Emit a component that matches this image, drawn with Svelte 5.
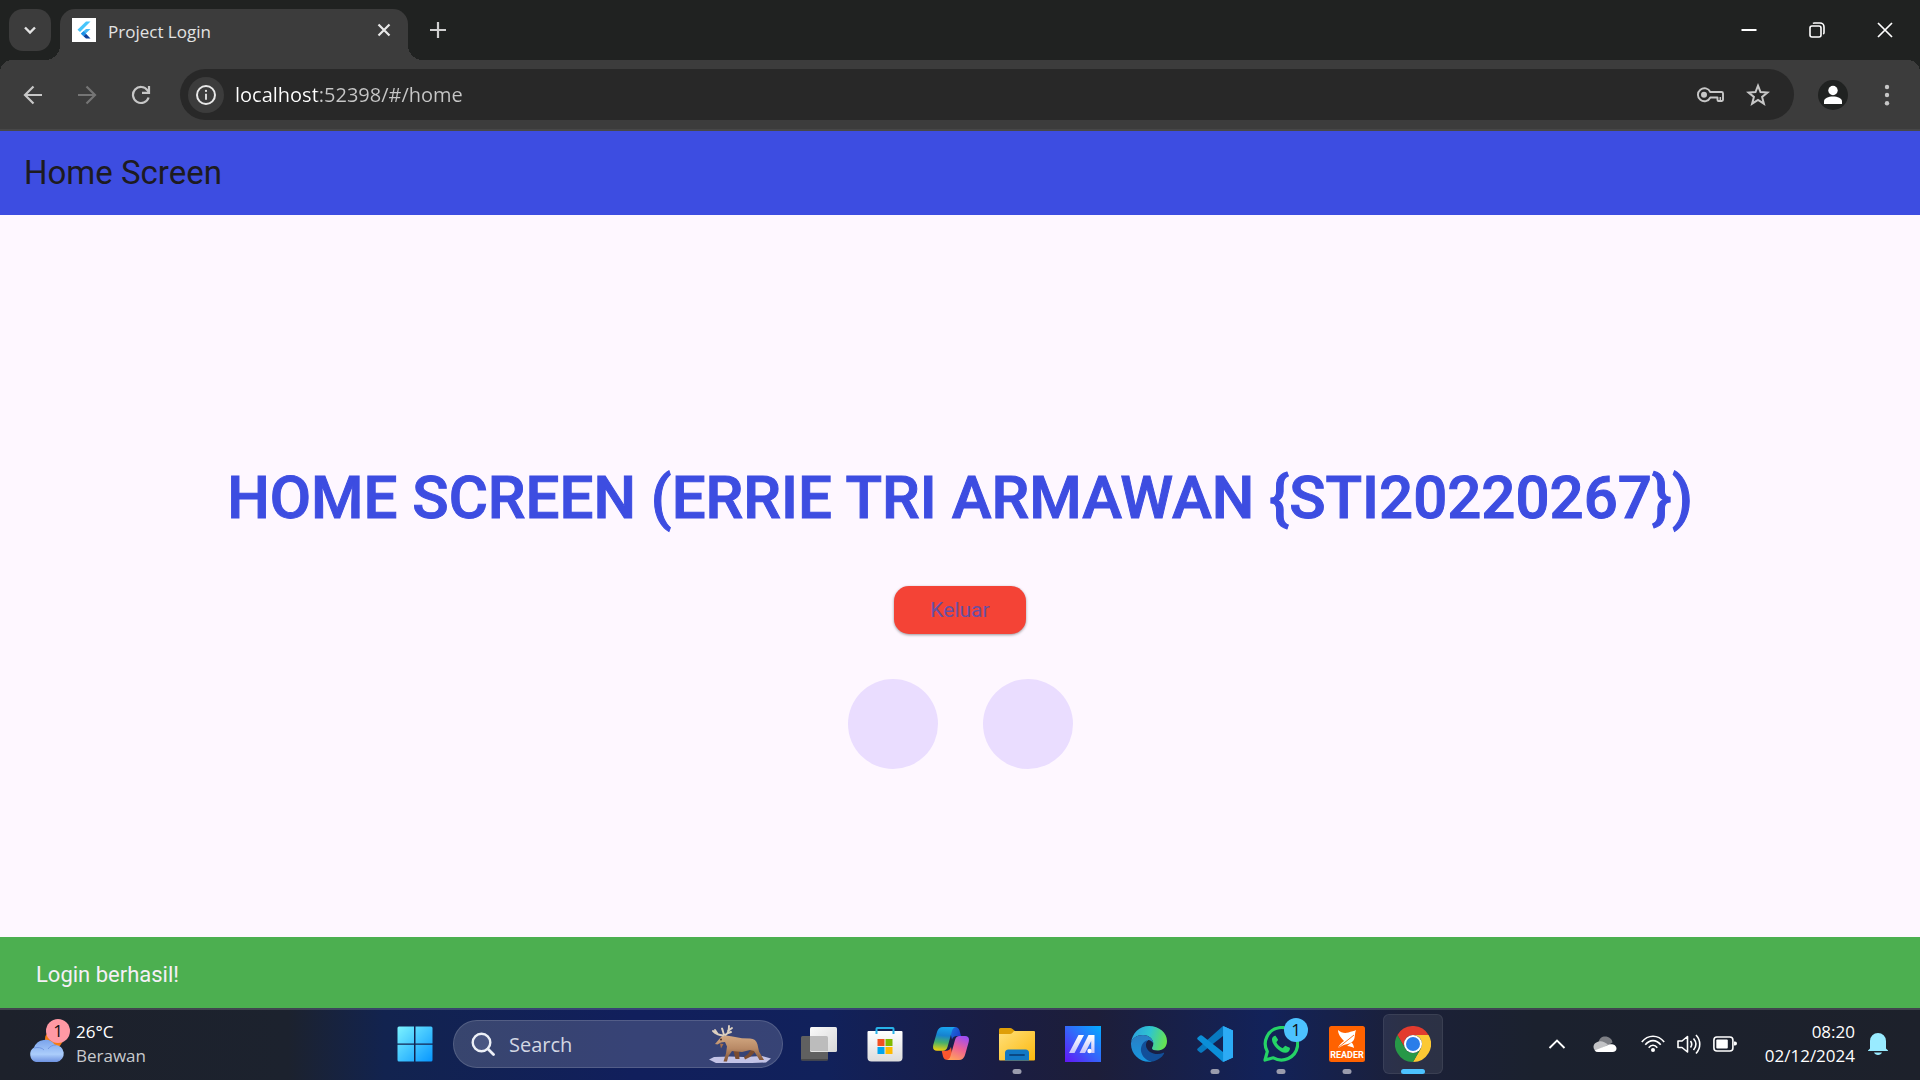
<script>
  let url = $state('localhost:52398/#/home');
  let query = $state('');
</script>

<div class="screen">
  <header class="tabstrip">
    <button class="tab-search" aria-label="Search tabs">
      <svg width="18" height="18" viewBox="0 0 18 18"><path d="M4 6.5l5 5 5-5" fill="none" stroke="#e3e3e3" stroke-width="2.4" /></svg>
    </button>
    <div class="tab">
      <svg class="favicon" width="24" height="24" viewBox="0 0 24 24">
        <rect width="24" height="24" fill="#fff" />
        <path d="M14 3.5h4.5L8 14l-2.5-2.3z" fill="#47c5fb" />
        <path d="M14 11h4.5l-4.7 4.5L11.500 18 8.800 15.500z" fill="#47b8f5" />
        <path d="M11.500 13.200l2.500 2.600-2.500 2.500-2.600-2.500z" fill="#1b8fe8" />
        <path d="M11.500 18.300l2.500-2.500 4.500 4.700H14z" fill="#0b3f9c" />
      </svg>
      <span class="tab-title">Project Login</span>
      <button class="plain tab-close" aria-label="Close tab">
        <svg width="14" height="14" viewBox="0 0 14 14"><path d="M1.500 1.500l11 11M12.500 1.500l-11 11" stroke="#e8e8e8" stroke-width="2.200" /></svg>
      </button>
    </div>
    <button class="plain new-tab" aria-label="New tab">
      <svg width="16" height="16" viewBox="0 0 16 16"><path d="M8 0v16M0 8h16" stroke="#d0d0d0" stroke-width="2.200" /></svg>
    </button>
    <div class="window-controls">
      <button class="plain" aria-label="Minimize">
        <svg width="16" height="16" viewBox="0 0 16 16"><path d="M.5 8h15" stroke="#fff" stroke-width="2" /></svg>
      </button>
      <button class="plain" aria-label="Restore">
        <svg width="16" height="16" viewBox="0 0 16 16" fill="none" stroke="#fff" stroke-width="1.600"><rect x="1" y="4" width="11" height="11" rx="2" /><path d="M4 1.500C4.500 1 5 1 5.500 1H11a4 4 0 0 1 4 4v5.500c0 .7-.3 1.200-.8 1.500" /></svg>
      </button>
      <button class="plain" aria-label="Close">
        <svg width="16" height="16" viewBox="0 0 16 16"><path d="M1 1l14 14M15 1L1 15" stroke="#fff" stroke-width="1.700" /></svg>
      </button>
    </div>
  </header>

  <nav class="toolbar" aria-label="Browser">
    <button class="plain nav" aria-label="Back">
      <svg width="20" height="20" viewBox="0 0 20 20" fill="none" stroke="#c7c7c7" stroke-width="2.200"><path d="M19 10H3M10.500 1.500L2 10l8.500 8.500" /></svg>
    </button>
    <button class="plain nav" aria-label="Forward">
      <svg width="20" height="20" viewBox="0 0 20 20" fill="none" stroke="#757575" stroke-width="2.200"><path d="M1 10h16M9.500 1.500L18 10l-8.500 8.500" /></svg>
    </button>
    <button class="plain nav" aria-label="Reload">
      <svg width="20" height="20" viewBox="0 0 20 20" fill="none" stroke="#c7c7c7" stroke-width="2.200"><path d="M17.600 12.500A8 8 0 1 1 16.500 5.300L18 7.300" /><path d="M18 1v6.900h-7" /></svg>
    </button>
    <div class="address">
      <button class="site-info" aria-label="Site information">
        <svg width="22" height="22" viewBox="0 0 22 22"><circle cx="11" cy="11" r="9" fill="none" stroke="#e8e8e8" stroke-width="2" /><path d="M11 9.800v6" stroke="#e8e8e8" stroke-width="1.800" /><circle cx="11" cy="6.900" r="1.100" fill="#e8e8e8" /></svg>
      </button>
      <input class="url" type="text" aria-label="Address" spellcheck="false" bind:value={url} />
      <button class="plain small" aria-label="Passwords">
        <svg width="28" height="16" viewBox="0 0 28 16" fill="none" stroke="#c7c7c7" stroke-width="1.900"><path d="M14.300 5H25.500q1.500 0 1.500 1.500v6.300q0 1.200-1.200 1.200h-3.300q-1 0-1-1v-2.500h-7.200a6.500 6.500 0 1 1 0-5.500z" stroke-linejoin="round" /><circle cx="8" cy="7.800" r="3" fill="#c7c7c7" stroke="none" /><path d="M24.300 10v4" stroke-width="1.500" /></svg>
      </button>
      <button class="plain small" aria-label="Bookmark this tab">
        <svg width="24" height="24" viewBox="0 0 24 24"><path d="M12 2.700l2.500 6.300 7 .5-5.400 4.400 1.800 6.800-5.900-3.800-5.900 3.800 1.800-6.800-5.400-4.400 7-.5z" fill="none" stroke="#c7c7c7" stroke-width="2" /></svg>
      </button>
    </div>
    <button class="profile" aria-label="Profile">
      <svg width="30" height="30" viewBox="0 0 30 30" fill="#fff"><circle cx="15" cy="10.500" r="4.700" /><path d="M6 24v-2.500c0-3.500 4.500-5 9-5s9 1.500 9 5V24z" /></svg>
    </button>
    <button class="plain more" aria-label="More">
      <svg width="6" height="22" viewBox="0 0 6 22" fill="#c7c7c7"><circle cx="3" cy="3" r="2.200" /><circle cx="3" cy="11" r="2.200" /><circle cx="3" cy="19.300" r="2.200" /></svg>
    </button>
  </nav>

  <div class="page">
    <header class="appbar"><span>Home Screen</span></header>
    <main>
      <h1>HOME SCREEN (ERRIE TRI ARMAWAN &#123;STI20220267&#125;)</h1>
      <button class="logout">Keluar</button>
      <div class="avatars">
        <div class="avatar"></div>
        <div class="avatar"></div>
      </div>
    </main>
    <div class="snackbar" role="status">Login berhasil!</div>
  </div>

  <footer class="taskbar">
    <button class="plain weather">
      <span class="weather-icon">
        <svg width="42" height="44" viewBox="0 0 42 44">
          <defs><linearGradient id="cloud" x2="0" y2="1"><stop stop-color="#7ba4ec" /><stop offset=".65" stop-color="#abcdfb" /><stop offset="1" stop-color="#6e92e0" /></linearGradient></defs>
          <circle cx="26" cy="20" r="9" fill="#f57c12" />
          <path d="M8 43a8 8 0 0 1-2-14.500A12 12 0 0 1 27 26a8.600 8.600 0 0 1 2 17z" fill="url(#cloud)" />
          <path d="M6 29c4-1 8-.5 10 2M20 30c2-3 5-4 8-4" fill="none" stroke="#7298e3" stroke-width="1" />
        </svg>
        <span class="badge pink">1</span>
      </span>
      <span class="weather-text"><span>26°C</span><span class="dim">Berawan</span></span>
    </button>

    <div class="apps">
      <button class="app" aria-label="Start">
        <svg width="36" height="36" viewBox="0 0 36 36">
          <defs><linearGradient id="win" x1="0" y1="0" x2="1" y2="1" gradientUnits="objectBoundingBox"><stop stop-color="#7cf3ff" /><stop offset="1" stop-color="#0796ff" /></linearGradient></defs>
          <path d="M2 0.500h15v17H.5V2Q.5.500 2 .5zM18.500.5h15.500q1.500 0 1.500 1.500v15.500h-17zM.5 18.800h16.500v16.700H2Q.5 35.500.5 34zM18.500 18.800h17V34q0 1.500-1.500 1.500H18.500z" fill="url(#win)" />
        </svg>
      </button>
      <label class="search">
        <svg width="24" height="24" viewBox="0 0 24 24" fill="none" stroke="#edf0f7"><circle cx="10.500" cy="10.500" r="8.800" stroke-width="2.400" fill="#6672a0" fill-opacity=".4" /><path d="M17 17l5.500 5.500" stroke-width="2.800" stroke-linecap="round" /></svg>
        <input type="search" placeholder="Search" aria-label="Search" bind:value={query} />
        <svg width="64" height="40" viewBox="0 0 64 40">
          <defs><linearGradient id="moose" x2="0" y2="1"><stop stop-color="#d3a983" /><stop offset=".5" stop-color="#b98a66" /><stop offset="1" stop-color="#7d5034" /></linearGradient></defs>
          <path d="M1 35.500l5-2.500 16-.5 14 .5 18-1 9 2.500-5 4-14 .5H8z" fill="#c3c3e6" />
          <path d="M25 25l2.500 10h4L31 25zM44 24l-4 6-4 3 1 2.500 5-2.500 6-6z" fill="#7a4c31" />
          <path d="M7 20l6-7q2-2 5-1.500l5 .8 11 2 8 .2c4 0 6.500 2 7.500 6l1.500 7 5 8.500h-4.500L46 27l-4-1-8 2-10-1-3.500 5-1.500 5.500h-3.500l2.500-8 1-7-2-4.500-4 .5-3.500 2z" fill="url(#moose)" />
          <path d="M12 19.500l1 5 2.500-4.500z" fill="#a8714c" />
          <path d="M15 11.500Q9 11 5 7M10 10.500L7 6M17 11c3-1 4-4 4-9M16 10.500c-1-2-1-4-2-6M20 7l4-3M20 9l3-1" fill="none" stroke="#ddd0c0" stroke-width="1.900" stroke-linecap="round" />
          <circle cx="13" cy="15.500" r=".9" fill="#3b241c" />
        </svg>
      </label>
      <button class="app" aria-label="Task view">
        <svg width="36" height="36" viewBox="0 0 36 36">
          <defs><linearGradient id="tv" x2="1" y2="1"><stop stop-color="#fafafa" /><stop offset="1" stop-color="#d8d8d8" /></linearGradient></defs>
          <rect y="10" width="27" height="24.500" rx="1.500" fill="#606060" /><path d="M0 33h27v.5q0 1-1 1H1q-1 0-1-1z" fill="#484848" />
          <rect x="9" y="1" width="27" height="25" rx="1.500" fill="url(#tv)" /><path d="M9 10h16.500q1.500 0 1.500 1.500V25H10.500Q9 25 9 23.500z" fill="#bcbcbc" />
        </svg>
      </button>
      <button class="app" aria-label="Store">
        <svg width="36" height="36" viewBox="0 0 36 36">
          <defs><linearGradient id="bag" x2="0" y2="1"><stop stop-color="#fff" /><stop offset="1" stop-color="#dcdcdc" /></linearGradient></defs>
          <path d="M1.500 5h33q1 0 1 1v25.500q0 4-4 4h-27q-4 0-4-4V6q0-1 1-1z" fill="url(#bag)" />
          <path d="M9.500 8V2.800q0-.8.8-.8h15.400q.8 0 .8.800V8" fill="none" stroke="#27b2e8" stroke-width="2" />
          <path d="M10.500 13h7v7h-7z" fill="#f25022" /><path d="M18.500 13h7v7h-7z" fill="#7fba00" /><path d="M10.500 21h7v7h-7z" fill="#00a4ef" /><path d="M18.500 21h7v7h-7z" fill="#ffb900" />
        </svg>
      </button>
      <button class="app" aria-label="Copilot">
        <svg width="36" height="36" viewBox="0 0 36 36">
          <defs>
            <linearGradient id="cpa" x1=".4" x2=".3" y2="1"><stop stop-color="#19a3ee" /><stop offset=".35" stop-color="#1682cf" /><stop offset=".65" stop-color="#46b06b" /><stop offset="1" stop-color="#f3d00b" /></linearGradient>
            <linearGradient id="cpb" x1=".7" x2=".3" y2="1"><stop stop-color="#a04ef2" /><stop offset=".5" stop-color="#ee6293" /><stop offset="1" stop-color="#ffa05c" /></linearGradient>
            <linearGradient id="cpc" x2="1" y2=".6"><stop stop-color="#1c79e0" /><stop offset="1" stop-color="#1b3fc8" /></linearGradient>
          </defs>
          <path d="M16 1h6q3.500 0 4.500 3.500l1.500 5.500h-4q-4 0-5 3.500z" fill="url(#cpc)" />
          <path d="M20 34h-5q-4 0-5-3.500l-1.300-5.800H13q4 0 5-4z" fill="#f9562f" />
          <path d="M10 1h13q-3 .3-4 4l-4.500 16q-1.200 3.800-4.500 3.800H4q-5 0-3.700-6L4 6q1.500-5 6-5z" fill="url(#cpa)" />
          <path d="M26 34H13.500q3-.3 4-4L22 14q1-4 4.500-4H32q5 0 3.700 6L32 29q-1.500 5-6 5z" fill="url(#cpb)" />
        </svg>
      </button>
      <button class="app running" aria-label="File Explorer">
        <svg width="36" height="36" viewBox="0 0 36 36">
          <defs><linearGradient id="folder" x2="1" y2="1"><stop stop-color="#ffe07a" /><stop offset="1" stop-color="#fcb80d" /></linearGradient></defs>
          <path d="M0 10V3.500Q0 2 1.500 2H11q1.500 0 2.500 1l2.500 2v5z" fill="#df9f08" />
          <path d="M0 8h11q1 0 2-.8L15 5h20q1 0 1 1v27.500q0 1-1 1H1q-1 0-1-1z" fill="url(#folder)" />
          <path d="M6 34.500V27q0-3.500 3.500-3.500h17Q30 23.500 30 27v7.500z" fill="#1278c4" /><path d="M11 29h14" stroke="#0a4884" stroke-width="1.800" stroke-linecap="round" />
        </svg>
      </button>
      <button class="app" aria-label="MyASUS">
        <svg width="36" height="36" viewBox="0 0 36 36">
          <defs><linearGradient id="asus" x1="0" y1="1" x2="1" y2="0"><stop stop-color="#6315f5" /><stop offset=".5" stop-color="#3466fa" /><stop offset="1" stop-color="#02adff" /></linearGradient><linearGradient id="asl" x2="0" y2="1"><stop stop-color="#fff" /><stop offset="1" stop-color="#c6c4fb" /></linearGradient></defs>
          <path d="M0 0h36v36H0z" fill="url(#asus)" />
          <path d="M13.500 9h5.500L9.500 27H4zM23.500 9H29.500v18h-3.300V15L20 27h-5.500z" fill="url(#asl)" /><circle cx="24.500" cy="25" r="2.200" fill="#fff" />
        </svg>
      </button>
      <button class="app" aria-label="Edge">
        <svg width="36" height="36" viewBox="0 0 36 36">
          <defs><linearGradient id="eda" y1=".3" x2="1" y2=".5"><stop stop-color="#2b9fe0" /><stop offset=".5" stop-color="#2fc5cf" /><stop offset="1" stop-color="#66e34f" /></linearGradient><linearGradient id="edb" x2="0" y2="1"><stop stop-color="#2a7ec4" /><stop offset="1" stop-color="#1697e0" /></linearGradient></defs>
          <path d="M0 17C1 7 8.500 0 18 0c10.500 0 18 7 18 15 0 6-4 9.500-9 9.500-4 0-6-1-6-2.300 0-1 1.300-1.700 1.300-4.700 0-4-4-8.500-10.300-8.500C6 9 1 12.500 0 17z" fill="url(#eda)" />
          <path d="M0 17c1-4.500 6-8 12-8 6.300 0 10.300 4.500 10.300 8.500-1-2-3-3.500-5-3.500-4 3-6.300 7-5 12.500 1 4.500 5 8.500 9.200 9C10 37.500 0 29 0 18z" fill="url(#edb)" />
          <path d="M15.500 14.600c-5 2.400-6.500 8-5 12.400 2 5.500 6.500 8.500 11.500 8.500 4.500-1 9-4 11-7.700.4-.8-.2-1.200-1-.8-7 3-16-.5-17-7-.2-2 .5-4 1.500-5.200z" fill="#124f99" />
        </svg>
      </button>
      <button class="app running" aria-label="Visual Studio Code">
        <svg width="36" height="36" viewBox="0 0 36 36">
          <path d="M26 0L36 4.500v27L26 36z" fill="#29a8f2" />
          <path d="M26 0v10L5 26.500q-1 .7-2 0L.7 24.400q-1-1 0-2z" fill="#0879c0" />
          <path d="M26 36V26L5 9.500q-1-.7-2 0L.7 11.600q-1 1 0 2z" fill="#0b8fd8" />
          <path d="M26 0l10 4.500v27L26 36q1-.5 1-2V2q0-1.500-1-2z" fill="#2cabf5" />
        </svg>
      </button>
      <button class="app running" aria-label="WhatsApp">
        <svg width="36" height="36" viewBox="0 0 36 36">
          <path d="M2 34l2.300-8.400A16.200 16.200 0 1 1 10.400 31.800z" fill="none" stroke="#25d366" stroke-width="3.200" stroke-linejoin="round" />
          <path d="M12.500 9.700c-.7-.2-3.700 1-3.500 4.300.3 5 8 13 13.500 12.800 2.500 0 4.500-1.800 4.500-4.500 0-.5-.3-.7-4.500-2.600-.9-.3-2.300 2.800-3.300 2.400-2.300-1-4.700-3.200-5.700-5.500-.2-.8 1.900-2 1.500-3z" fill="#25d366" />
        </svg>
        <span class="badge blue">1</span>
      </button>
      <button class="app running" aria-label="Foxit Reader">
        <svg width="36" height="36" viewBox="0 0 36 36">
          <rect width="36" height="36" rx="2.500" fill="#ff6200" />
          <path d="M9 4c3 3 7 3.500 10.500 2.500C22 5.500 25.500 5 27 4c-1 3-1 5-1.500 8-1 4-5 6-9 6.500C14 19 12 20.500 9 22c1-3 3-5 6-7-3-3-6-7-6-11z" fill="#fff" />
          <path d="M9.500 21.500L25 9" stroke="#ff6200" stroke-width=".9" fill="none" /><path d="M18 20c3 .3 5 .8 7 2-.5-3-1-4-2.500-5.500z" fill="#fff" />
          <text x="18" y="32" text-anchor="middle" class="reader">READER</text>
        </svg>
      </button>
      <button class="app active" aria-label="Chrome">
        <svg width="36" height="36" viewBox="0 0 36 36">
          <path d="M2.400 9A18 18 0 0 1 33.600 9H18a9 9 0 0 0-7.800 13.500z" fill="#e33b2e" />
          <path d="M33.600 9A18 18 0 0 1 18 36l7.800-13.500A9 9 0 0 0 18 9z" fill="#fcc934" />
          <path d="M2.400 9A18 18 0 0 0 18 36l7.800-13.500a9 9 0 0 1-15.600 0z" fill="#279847" />
          <circle cx="18" cy="18" r="9" fill="#fff" /><circle cx="18" cy="18" r="7" fill="#2a7de9" />
        </svg>
      </button>
    </div>

    <div class="tray">
      <button class="plain overflow" aria-label="Show hidden icons">
        <svg width="18" height="12" viewBox="0 0 18 12"><path d="M1.500 10L9 2.500l7.500 7.500" fill="none" stroke="#fff" stroke-width="1.900" /></svg>
      </button>
      <button class="plain cloud" aria-label="OneDrive">
        <svg width="24" height="24" viewBox="0 0 24 24"><path d="M5 12C6 6 9 4.500 12 4.500c4 0 7 2.500 7.500 6L12 15z" fill="#7d7f85" /><path d="M6 9.500c3-.8 6 1 9 3L4 19.500A5 5 0 0 1 .5 15C.5 12 3 10 6 9.500z" fill="#c2c3c6" /><path d="M14 13.500c3-2.500 9.500-1.500 9.500 3 0 2-1.500 3.500-4 3.500H5q-2 0-3.500-1.500z" fill="#fff" /></svg>
      </button>
      <button class="plain quick" aria-label="Network, volume and battery">
        <svg width="24" height="24" viewBox="0 0 24 24" fill="none" stroke="#fff" stroke-width="1.600"><path d="M.8 10C7 2.300 17 2.300 23.200 10M4.300 12.800c4.300-5.600 11.100-5.600 15.400 0M7.700 15.700c2.400-3.200 6.200-3.200 8.600 0" /><circle cx="12" cy="18" r="2" fill="#fff" stroke="none" /></svg>
        <svg width="24" height="24" viewBox="0 0 24 24" fill="none" stroke="#fff" stroke-width="1.600" stroke-linejoin="round"><path d="M1 9v6.500h4L10.500 20V4.500L5 9zM13.500 9c1.500 2 1.500 4.500 0 6.500M16.500 6.500c3 3.500 3 8 0 11.500M19 3c5 5.500 5 13 0 18.500" /></svg>
        <svg width="24" height="24" viewBox="0 0 24 24"><rect x=".9" y="5" width="19" height="14" rx="3" fill="none" stroke="#fff" stroke-width="1.600" /><rect x="3.300" y="7.500" width="11.500" height="9" rx="1" fill="#fff" /><path d="M21 9.500h1q2 0 2 2t-2 2h-1z" fill="#fff" /></svg>
      </button>
      <button class="plain clock"><span>08:20</span><span>02/12/2024</span></button>
      <button class="plain bell" aria-label="Notifications">
        <svg width="20" height="24" viewBox="0 0 20 24" fill="#99ebff"><path d="M2 16.500V9a8 8 0 0 1 16 0v7.500l2 2V19H0v-.5zM6 20.500h8c-.6 1.600-2 2.500-4 2.500s-3.400-.9-4-2.500z" /></svg>
      </button>
    </div>
  </footer>
</div>

<style>
  :global(body) { margin: 0; }
  * { box-sizing: border-box; }
  svg { display: block; flex: none; }
  button { border: 0; padding: 0; font: inherit; color: inherit; cursor: pointer; }
  .plain { background: none; display: flex; align-items: center; justify-content: center; }
  .screen { min-height: 100vh; display: flex; flex-direction: column; font-family: "Segoe UI", "Open Sans", sans-serif; color: #fff; }

  .tabstrip { height: 60px; background: #202221; display: flex; }
  .tab-search { width: 42px; height: 42px; margin: 9px 9px 0; border-radius: 14px; background: #3c3c3c; display: flex; align-items: center; justify-content: center; }
  .tab { position: relative; width: 348px; height: 51px; margin-top: 9px; padding: 0 17px 9px 12px; background: #3c3c3c; border-radius: 15px 15px 0 0; display: flex; align-items: center; gap: 12px; }
  .tab::before, .tab::after { content: ""; position: absolute; bottom: 0; width: 15px; height: 15px; }
  .tab::before { right: 100%; background: radial-gradient(circle at 0 0, transparent 15px, #3c3c3c 15px); }
  .tab::after { left: 100%; background: radial-gradient(circle at 100% 0, transparent 15px, #3c3c3c 15px); }
  .tab-title { flex: 1; font-size: 17px; line-height: 24px; color: #e3e3e3; padding-top: 3px; }
  .new-tab { width: 42px; height: 42px; margin: 9px 0 0 9px; }
  .window-controls { margin-left: auto; padding-right: 1px; display: flex; height: 59px; }
  .window-controls button { width: 68px; }

  .toolbar { height: 71px; background: #3c3c3c; border-bottom: 2px solid #474747; display: flex; align-items: center; padding: 0 30px 0 6px; position: relative; }
  .toolbar::before, .toolbar::after { content: ""; position: absolute; top: 0; width: 12px; height: 12px; }
  .toolbar::before { left: 0; background: radial-gradient(circle at 100% 100%, transparent 12px, #202221 12px); }
  .toolbar::after { right: 0; background: radial-gradient(circle at 0 100%, transparent 12px, #202221 12px); }
  .nav { width: 54px; height: 42px; }
  .address { flex: 1; height: 51px; margin-left: 12px; padding: 0 24px 0 8px; border-radius: 26px; background: #282828; display: flex; align-items: center; gap: 22px; }
  .site-info { width: 36px; height: 36px; border-radius: 50%; background: #3c3c3c; display: flex; align-items: center; justify-content: center; }
  .url { flex: 1; min-width: 0; margin-left: -11px; border: 0; padding: 0; outline: 0; font-family: inherit; font-size: 20px; line-height: 30px; color: transparent; background: linear-gradient(90deg, #fff 82px, #c7c7c7 82px); background-clip: text; -webkit-background-clip: text; }
  .profile { width: 30px; height: 30px; margin-left: 24px; border-radius: 50%; background: #202221; }
  .more { margin-left: 36px; }

  .page { flex: 1; position: relative; display: flex; flex-direction: column; background: #fef7ff; font-family: Roboto, sans-serif; }
  .appbar { height: 84px; padding: 0 24px 2px; display: flex; align-items: center; background: #3d4de1; color: #1d1b20; font-size: 33px; }
  main { flex: 1; display: flex; flex-direction: column; align-items: center; justify-content: center; gap: 45px; }
  h1 { margin: 0; font-size: 60px; line-height: 86px; font-weight: 500; -webkit-text-stroke: 1px #3d4de1; color: #3d4de1; text-align: center; }
  .logout { height: 48px; padding: 0 36px; border-radius: 15px; background: #f44336; color: #6750a4; font-size: 21px; box-shadow: 0 1px 3px rgba(0, 0, 0, .4); }
  .avatars { display: flex; gap: 45px; }
  .avatar { width: 90px; height: 90px; border-radius: 50%; background: #eaddff; }
  .snackbar { position: absolute; left: 0; right: 0; bottom: 0; padding: 23px 36px 19px; background: #4caf50; color: #f5eff7; font-size: 22px; line-height: 29px; }

  .taskbar { height: 72px; padding-bottom: 2px; border-top: 2px solid rgba(255, 255, 255, .16); display: grid; grid-template-columns: 385fr 1058px 477fr; align-items: center; background: linear-gradient(90deg, #1d212b 0, #1c222e 15%, #12234f 20%, #111f5c 33%, #11215b 43%, #1a1d43 52%, #1d1e39 57%, #12225a 66%, #1b2039 73%, #1b212e 80%, #1d212b 100%) border-box; }
  .weather { justify-content: flex-start; gap: 6px; padding-left: 28px; font-size: 17px; line-height: 24px; text-align: left; }
  .weather-icon { position: relative; margin-top: -6px; }
  .weather-text { display: flex; flex-direction: column; }
  .dim { color: #c8cace; }
  .badge { position: absolute; width: 24px; height: 24px; border-radius: 50%; font-size: 17px; line-height: 24px; text-align: center; color: #111; }
  .pink { top: 0; right: 0; background: #ff99a4; }
  .blue { top: 4px; right: 3px; background: #4cc2ff; }
  .apps { display: flex; align-items: center; gap: 6px; }
  .app { position: relative; flex: none; width: 60px; height: 60px; border-radius: 6px; background: none; display: flex; align-items: center; justify-content: center; }
  .running::after, .active::after { content: ""; position: absolute; bottom: 0; left: 50%; width: 9px; height: 5px; border-radius: 3px; background: #9a9cad; transform: translateX(-50%); }
  .active { background: rgba(255, 255, 255, .08); box-shadow: inset 0 0 0 1px rgba(255, 255, 255, .07); }
  .active::after { width: 24px; background: #4cc2ff; }
  .search { flex: 1; min-width: 0; height: 48px; margin-left: 2px; padding: 0 10px 0 17px; border-radius: 24px; background: rgba(255, 255, 255, .16); border: 1px solid rgba(255, 255, 255, .14); display: flex; align-items: center; gap: 14px; }
  .search input { flex: 1; min-width: 0; border: 0; padding: 0; outline: 0; background: none; font-family: inherit; font-size: 20px; color: #fff; }
  .search input::placeholder { color: #d3d7e3; opacity: 1; }
  .reader { font-family: Roboto, sans-serif; font-size: 9px; font-weight: 700; fill: #fff; }

  .tray { display: flex; align-items: center; justify-content: flex-end; padding-right: 32px; }
  .overflow { width: 36px; height: 48px; margin-right: 18px; }
  .cloud { margin-right: 24px; }
  .quick { gap: 12px; margin-right: 24px; }
  .clock { min-width: 94px; flex-direction: column; align-items: flex-end; font-size: 17px; line-height: 24px; margin-right: 13px; }
</style>
